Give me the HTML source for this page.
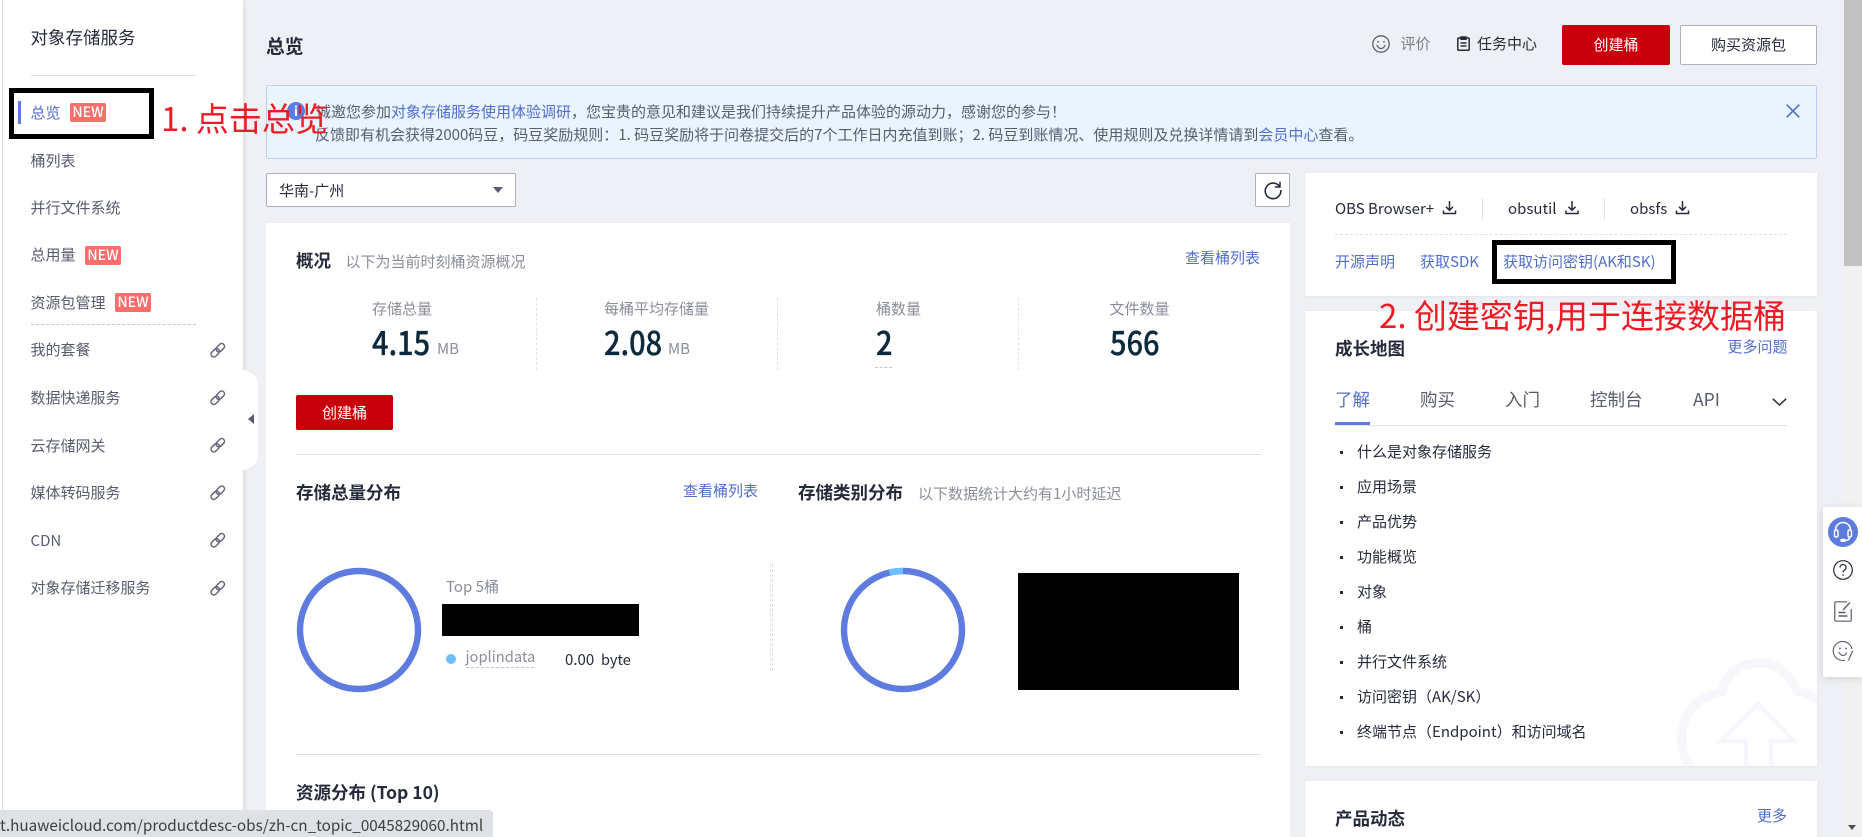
<!DOCTYPE html>
<html lang="zh-CN">
<head>
<meta charset="utf-8">
<title>对象存储服务</title>
<style>
html,body{margin:0;padding:0;width:1862px;height:837px;overflow:hidden;background:#eef0f5;}
body{position:relative;font-family:"Noto Sans CJK SC","Liberation Sans",sans-serif;font-size:15px;color:#575d6c;}
.a{position:absolute;}
.t{position:absolute;line-height:20px;height:20px;white-space:nowrap;}
.l{color:#526ecc;}
.g{color:#8a8e99;}
.d{color:#252b3a;}
.b{font-weight:700;color:#252b3a;font-size:17.5px;}
.new{position:absolute;width:36px;height:19px;line-height:19px;background:#f66f6a;color:#fff;font-size:14px;font-weight:500;text-align:center;border-radius:2px;}
.n{position:absolute;line-height:40px;height:40px;white-space:nowrap;font-size:32.5px;font-weight:500;color:#0d2a3d;transform:scaleX(.89);transform-origin:0 50%;-webkit-text-stroke:.35px #0d2a3d;}
.r{position:absolute;line-height:44px;height:44px;white-space:nowrap;font-size:33px;color:#ed1c24;font-weight:400;}
.card{position:absolute;background:#fff;box-shadow:0 1px 4px rgba(0,0,0,.05);}
.box{position:absolute;border:5px solid #000;box-sizing:border-box;}
.btn{position:absolute;box-sizing:border-box;text-align:center;border-radius:2px;}
.dot{position:absolute;width:3px;height:3px;background:#252b3a;left:1340px;}
svg{position:absolute;display:block;overflow:visible;}
</style>
</head>
<body>

<!-- sidebar -->
<div class="a" style="left:0;top:0;width:243px;height:837px;background:#fff;box-shadow:2px 0 4px rgba(0,0,0,.07);"></div>
<div class="a" style="left:2px;top:0;width:1px;height:837px;background:#dcdcdc;"></div>
<div class="a" style="left:230px;top:370px;width:28px;height:100px;background:#fff;border-radius:0 16px 16px 0;"></div>
<svg style="left:0;top:0;" width="1" height="1"><path d="M254 414V424L248 419Z" fill="#575d6c"/></svg>

<div class="t d" style="left:30.500px;top:27.500px;font-size:17.5px;color:#252b3a;">对象存储服务</div>
<div class="a" style="left:31px;top:75px;width:165px;height:1px;background:#dfe1e6;"></div>

<div class="a" style="left:18px;top:101px;width:3px;height:23px;background:#5e7ce0;"></div>
<div class="t l" style="left:30.500px;top:103px;">总览</div>
<div class="new" style="left:70px;top:103px;">NEW</div>
<div class="t" style="left:30.500px;top:151px;">桶列表</div>
<div class="t" style="left:30.500px;top:198px;">并行文件系统</div>
<div class="t" style="left:30.500px;top:245px;">总用量</div>
<div class="new" style="left:85px;top:246px;">NEW</div>
<div class="t" style="left:30.500px;top:293px;">资源包管理</div>
<div class="new" style="left:115px;top:293px;">NEW</div>
<div class="a" style="left:31px;top:324px;width:165px;border-top:1px dashed #c4c6cc;"></div>
<div class="t" style="left:30.500px;top:340px;">我的套餐</div>
<div class="t" style="left:30.500px;top:388px;">数据快递服务</div>
<div class="t" style="left:30.500px;top:436px;">云存储网关</div>
<div class="t" style="left:30.500px;top:483px;">媒体转码服务</div>
<div class="t" style="left:30.500px;top:531px;">CDN</div>
<div class="t" style="left:30.500px;top:578px;">对象存储迁移服务</div>

<svg width="1" height="1" style="left:0;top:0;">
<defs><g id="lk" fill="none" stroke="#62687a" stroke-width="1.5"><rect x="-1.5" y="-2.8" width="9.5" height="5.6" rx="2.8" transform="rotate(-45) translate(-7.2 0)"/><rect x="-1.5" y="-2.8" width="9.5" height="5.6" rx="2.8" transform="rotate(-45) translate(0 0)"/></g></defs>
<use href="#lk" x="218" y="350"/><use href="#lk" x="218" y="397.5"/><use href="#lk" x="218" y="445"/><use href="#lk" x="218" y="492.5"/><use href="#lk" x="218" y="540"/><use href="#lk" x="218" y="588"/>
</svg>

<!-- header -->
<div class="t" style="left:266px;top:36px;font-size:18.75px;font-weight:700;color:#252b3a;">总览</div>
<svg width="18" height="18" style="left:1372px;top:35px;" viewBox="0 0 18 18" fill="none" stroke="#575d6c" stroke-width="1.3"><circle cx="9" cy="9" r="8.2"/><path d="M5 10.5c1 2 2.500 3 4 3s3-1 4-3" stroke-linecap="round"/><circle cx="6" cy="6.800" r=".9" fill="#575d6c" stroke="none"/><circle cx="12" cy="6.800" r=".9" fill="#575d6c" stroke="none"/></svg>
<div class="t" style="left:1400.500px;top:34px;color:#7b7f8b;">评价</div>
<svg width="13" height="15" style="left:1457px;top:36px;" viewBox="0 0 13 15" fill="none" stroke="#252b3a" stroke-width="1.5"><rect x=".8" y="2" width="11.400" height="12.200" rx=".8"/><path d="M4 1h5v2.200H4zM3.500 7h6M3.500 10h6"/></svg>
<div class="t d" style="left:1477px;top:34px;">任务中心</div>
<div class="btn" style="left:1562px;top:25px;width:108px;height:40px;line-height:40px;background:#c7000b;color:#fff;">创建桶</div>
<div class="btn d" style="left:1680px;top:25px;width:137px;height:40px;line-height:38px;background:#fff;border:1px solid #adb0b8;">购买资源包</div>

<!-- banner -->
<div class="a" style="left:266px;top:85px;width:1551px;height:74px;box-sizing:border-box;background:#e9f4ff;border:1px solid #bccff5;border-radius:2px;"></div>
<div class="a" style="left:287px;top:102px;width:18px;height:18px;border-radius:50%;background:#5e7ce0;color:#fff;text-align:center;line-height:18px;font-size:13px;font-weight:700;">i</div>
<div class="t" style="left:316px;top:102px;">诚邀您参加<span class="l">对象存储服务使用体验调研</span>&#xFF0C;您宝贵的意见和建议是我们持续提升产品体验的源动力&#xFF0C;感谢您的参与&#xFF01;</div>
<div class="t" style="left:315px;top:125px;">反馈即有机会获得2000码豆&#xFF0C;码豆奖励规则&#xFF1A;1. 码豆奖励将于问卷提交后的7个工作日内充值到账&#xFF1B;2. 码豆到账情况、使用规则及兑换详情请到<span class="l">会员中心</span>查看。</div>
<svg width="14" height="14" style="left:1786px;top:104px;" viewBox="0 0 14 14" fill="none" stroke="#526ecc" stroke-width="1.6"><path d="M.7.700 13.300 13.300M13.300.700.700 13.300"/></svg>

<!-- select -->
<div class="a" style="left:266px;top:173px;width:250px;height:34px;box-sizing:border-box;background:#fff;border:1px solid #adb0b8;border-radius:2px;"></div>
<div class="t d" style="left:279px;top:180.500px;">华南-广州</div>
<svg width="10" height="6" style="left:493px;top:187px;"><path d="M0 0H10L5 6Z" fill="#575d6c"/></svg>
<div class="a" style="left:1255px;top:173px;width:35px;height:34px;box-sizing:border-box;background:#fff;border:1px solid #adb0b8;border-radius:2px;"></div>
<svg width="18" height="18" style="left:1263.500px;top:181px;" viewBox="0 0 18 18" fill="none" stroke="#252b3a" stroke-width="1.6"><path d="M15.500 5.500A7.800 7.800 0 1 0 16.800 9"/><path d="M16 .8v5.200h-5.200" stroke-width="1.500"/></svg>

<!-- main card -->
<div class="a" style="left:266px;top:223px;width:1024px;height:614px;background:#fff;"></div>
<div class="t b" style="left:296px;top:251px;">概况</div>
<div class="t g" style="left:345.500px;top:252px;">以下为当前时刻桶资源概况</div>
<div class="t l" style="left:1185px;top:248px;">查看桶列表</div>

<div class="t g" style="left:372px;top:299px;">存储总量</div>
<div class="n" style="left:372px;top:322px;">4.15</div>
<div class="t g" style="left:437px;top:339px;">MB</div>
<div class="a" style="left:536px;top:298px;height:72px;border-left:1px dashed #dfe1e6;"></div>

<div class="t g" style="left:604px;top:299px;">每桶平均存储量</div>
<div class="n" style="left:604px;top:322px;">2.08</div>
<div class="t g" style="left:668px;top:339px;">MB</div>
<div class="a" style="left:777px;top:298px;height:72px;border-left:1px dashed #dfe1e6;"></div>

<div class="t g" style="left:876px;top:299px;">桶数量</div>
<div class="n" style="left:876px;top:322px;">2</div>
<div class="a" style="left:875px;top:367px;width:17px;border-top:1px dashed #c4c6cc;"></div>
<div class="a" style="left:1018px;top:298px;height:72px;border-left:1px dashed #dfe1e6;"></div>

<div class="t g" style="left:1109.500px;top:299px;">文件数量</div>
<div class="n" style="left:1109.500px;top:322px;">566</div>

<div class="btn" style="left:296px;top:395px;width:97px;height:35px;line-height:35px;background:#c7000b;color:#fff;">创建桶</div>
<div class="a" style="left:296px;top:454px;width:965px;height:1px;background:#dfe1e6;"></div>

<div class="t b" style="left:296px;top:483px;">存储总量分布</div>
<div class="t l" style="left:683px;top:481px;">查看桶列表</div>
<div class="t b" style="left:798px;top:483px;">存储类别分布</div>
<div class="t g" style="left:918px;top:484px;">以下数据统计大约有1小时延迟</div>

<svg width="126" height="126" style="left:296px;top:567px;" viewBox="0 0 126 126"><circle cx="63" cy="63" r="59" fill="none" stroke="#5e7ce0" stroke-width="6.400"/></svg>
<div class="t g" style="left:446px;top:577px;">Top 5桶</div>
<div class="a" style="left:442px;top:604px;width:197px;height:32px;background:#000;"></div>
<div class="a" style="left:446px;top:654px;width:10px;height:10px;border-radius:50%;background:#6cbfff;"></div>
<div class="t g" style="left:465.500px;top:647px;font-size:14.7px;">joplindata</div>
<div class="a" style="left:466px;top:667px;width:68px;border-top:1px dashed #c4c6cc;"></div>
<div class="t d" style="left:565px;top:650px;">0.00</div>
<div class="t d" style="left:601px;top:650px;font-size:14.5px;">byte</div>
<div class="a" style="left:770px;top:564px;width:1px;height:107px;border-left:1px dashed #dfe1e6;border-right:1px dashed #dfe1e6;"></div>

<svg width="126" height="126" style="left:840px;top:567px;" viewBox="0 0 126 126"><circle cx="63" cy="63" r="59" fill="none" stroke="#5e7ce0" stroke-width="6.400"/><path d="M49.500 5.600A59 59 0 0 1 63 4" fill="none" stroke="#6cbfff" stroke-width="6.400"/></svg>
<div class="a" style="left:1018px;top:573px;width:221px;height:117px;background:#000;"></div>

<div class="a" style="left:296px;top:754px;width:965px;height:1px;background:#dfe1e6;"></div>
<div class="t b" style="left:296px;top:783px;">资源分布 (Top 10)</div>

<!-- right card 1 -->
<div class="card" style="left:1305px;top:173px;width:512px;height:123px;"></div>
<div class="t d" style="left:1335px;top:199px;">OBS Browser+</div>
<svg width="1" height="1" style="left:0;top:0;">
<defs><g id="dl" fill="none" stroke="#252b3a" stroke-width="1.5"><path d="M6.500 0V9M3 5.800 6.500 9.300 10 5.800M.5 9.500V12.500H12.500V9.500"/></g></defs>
<use href="#dl" x="1443" y="201"/><use href="#dl" x="1565.500" y="201"/><use href="#dl" x="1676" y="201"/>
</svg>
<div class="a" style="left:1482px;top:198px;width:1px;height:21px;background:#dfe1e6;"></div>
<div class="t d" style="left:1508px;top:199px;">obsutil</div>
<div class="a" style="left:1604px;top:198px;width:1px;height:21px;background:#dfe1e6;"></div>
<div class="t d" style="left:1630px;top:199px;">obsfs</div>
<div class="a" style="left:1335px;top:234px;width:452px;border-top:1px dashed #dfe1e6;"></div>
<div class="t l" style="left:1335px;top:252px;">开源声明</div>
<div class="t l" style="left:1420px;top:252px;">获取SDK</div>
<div class="t l" style="left:1503px;top:252px;">获取访问密钥(AK和SK)</div>

<!-- right card 2 -->
<div class="card" style="left:1305px;top:311px;width:512px;height:455px;overflow:hidden;">
<svg width="512" height="455" style="left:0;top:0;" viewBox="1305 311 512 455" fill="none" stroke="#f6f7fc" stroke-width="9"><path d="M1700 778C1670 752 1676 700 1722 692C1727 670 1742 663 1758 663C1778 663 1790 674 1797 692C1805 692 1812 696 1822 703"/><path d="M1746 770V741H1721L1758 704L1794 741H1771V770" stroke-width="4.500"/></svg>
</div>
<div class="t b" style="left:1335px;top:339px;">成长地图</div>
<div class="t l" style="left:1727.500px;top:337px;">更多问题</div>
<div class="t l" style="left:1335px;top:390px;font-size:17.5px;">了解</div>
<div class="t" style="left:1420px;top:390px;font-size:17.5px;">购买</div>
<div class="t" style="left:1505px;top:390px;font-size:17.5px;">入门</div>
<div class="t" style="left:1590px;top:390px;font-size:17.5px;">控制台</div>
<div class="t" style="left:1693px;top:390px;font-size:17.5px;">API</div>
<svg width="15" height="8" style="left:1772px;top:398px;" viewBox="0 0 15 8" fill="none" stroke="#252b3a" stroke-width="1.500"><path d="M.8.800 7.500 7 14.200.8"/></svg>
<div class="a" style="left:1335px;top:425px;width:452px;height:1px;background:#dfe1e6;"></div>
<div class="a" style="left:1335px;top:422px;width:35px;height:3px;background:#5e7ce0;"></div>

<div class="dot" style="top:451px;"></div><div class="t d" style="left:1357px;top:442px;">什么是对象存储服务</div>
<div class="dot" style="top:486px;"></div><div class="t d" style="left:1357px;top:477px;">应用场景</div>
<div class="dot" style="top:521px;"></div><div class="t d" style="left:1357px;top:512px;">产品优势</div>
<div class="dot" style="top:556px;"></div><div class="t d" style="left:1357px;top:547px;">功能概览</div>
<div class="dot" style="top:591px;"></div><div class="t d" style="left:1357px;top:582px;">对象</div>
<div class="dot" style="top:626px;"></div><div class="t d" style="left:1357px;top:617px;">桶</div>
<div class="dot" style="top:661px;"></div><div class="t d" style="left:1357px;top:652px;">并行文件系统</div>
<div class="dot" style="top:696px;"></div><div class="t d" style="left:1357px;top:687px;">访问密钥&#xFF08;AK/SK&#xFF09;</div>
<div class="dot" style="top:731px;"></div><div class="t d" style="left:1357px;top:722px;">终端节点&#xFF08;Endpoint&#xFF09;和访问域名</div>

<!-- right card 3 -->
<div class="card" style="left:1305px;top:781px;width:512px;height:56px;"></div>
<div class="t b" style="left:1335px;top:809px;">产品动态</div>
<div class="t l" style="left:1757px;top:806px;">更多</div>

<!-- scrollbar -->
<div class="a" style="left:1844px;top:0;width:18px;height:837px;background:#f1f1f1;"></div>
<div class="a" style="left:1844px;top:0;width:18px;height:266px;background:#c1c1c1;"></div>
<svg width="8" height="5" style="left:1848px;top:825px;"><path d="M0 0H8L4 5Z" fill="#505050"/></svg>

<!-- float panel -->
<div class="a" style="left:1823px;top:507px;width:39px;height:170px;background:#fff;box-shadow:0 2px 8px rgba(0,0,0,.12);"></div>
<svg width="30" height="30" style="left:1828px;top:517px;" viewBox="0 0 30 30" fill="none" stroke="#fff" stroke-width="1.500"><circle cx="15" cy="15" r="15" fill="#5e7ce0" stroke="none"/><path d="M7.500 14V13a7.500 7.500 0 0 1 15 0v1"/><rect x="6.500" y="13" width="3.500" height="7" rx="1.500"/><rect x="20" y="13" width="3.500" height="7" rx="1.500"/><path d="M21.500 20c0 2.500-2 3.500-5 3.500"/><rect x="13" y="22.500" width="4" height="1.800" rx=".9" fill="#fff"/></svg>
<svg width="20" height="20" style="left:1833px;top:560px;" viewBox="0 0 20 20" fill="none" stroke="#252b3a" stroke-width="1.200"><circle cx="10" cy="10" r="9.300"/><path d="M7 7.500a3 3 0 1 1 4.500 2.600c-1 .6-1.500 1.200-1.500 2.400"/><circle cx="10" cy="15" r=".8" fill="#252b3a" stroke="none"/></svg>
<svg width="20" height="21" style="left:1834px;top:601px;" viewBox="0 0 20 21" fill="none" stroke="#575d6c" stroke-width="1.200"><path d="M13 .8H2a1.200 1.200 0 0 0-1.200 1.200v17a1.200 1.200 0 0 0 1.200 1.200h14a1.200 1.200 0 0 0 1.200-1.200V8"/><path d="M9 9 16 1.500" stroke-width="1.300"/><path d="M4.500 11.500h7M4.500 15h9" stroke-width="1.400"/></svg>
<svg width="20" height="21" style="left:1833px;top:641px;" viewBox="0 0 20 21" fill="none" stroke="#575d6c" stroke-width="1.100"><path d="M19 8A9.500 9.500 0 1 0 12 19.200"/><path d="M19.500 10 15.500 19.500"/><path d="M6 11.500c1 2 3 3 4 3s2.500-.6 3.500-2.500" stroke-linecap="round"/><circle cx="7" cy="7.500" r=".9" fill="#575d6c" stroke="none"/><circle cx="13" cy="7.500" r=".9" fill="#575d6c" stroke="none"/></svg>

<!-- annotations -->
<div class="box" style="left:9px;top:88px;width:145px;height:51px;"></div>
<div class="box" style="left:1492px;top:240px;width:184px;height:44px;"></div>
<div class="r" style="left:161px;top:95px;">1. 点击总览</div>
<div class="r" style="left:1379px;top:292px;">2. 创建密钥,用于连接数据桶</div>

<!-- status bar -->
<div class="a" style="left:0;top:810px;width:493px;height:27px;background:#dee1e6;border-radius:0 4px 0 0;"></div>
<div class="t" style="left:0;top:815px;color:#3c4043;font-size:15.25px;">t.huaweicloud.com/productdesc-obs/zh-cn_topic_0045829060.html</div>

</body>
</html>
